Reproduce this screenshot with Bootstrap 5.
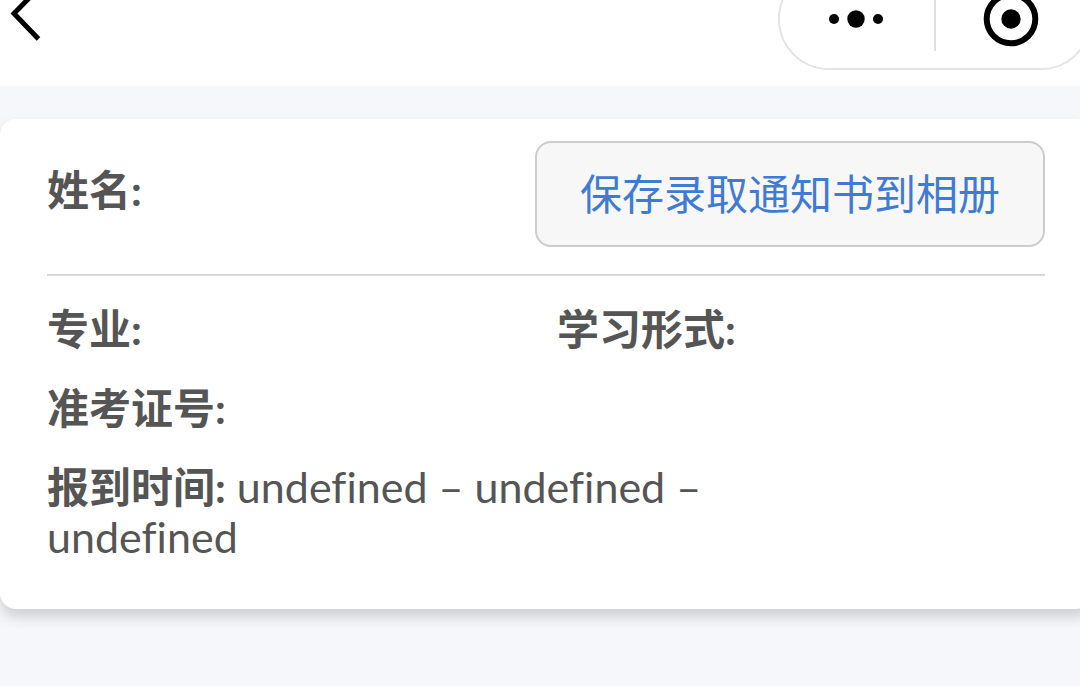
<!DOCTYPE html>
<html lang="zh-CN">
<head>
<meta charset="utf-8">
<meta name="viewport" content="width=device-width, initial-scale=1">
<title>录取通知书</title>
<link href="https://cdn.jsdelivr.net/npm/bootstrap@5.3.0/dist/css/bootstrap.min.css" rel="stylesheet">
<style>
  body { background: #f5f7fb; color: #555; font-family: Lato, "Noto Sans CJK SC", sans-serif; font-size: 42px; line-height: 50px; font-variant-ligatures: none; }
  .topbar { height: 86px; }
  .capsule { width: 314px; height: 102px; margin: -32px -12px 0 0; border: 2px solid #e4e4e4; border-radius: 51px; }
  .capsule .btn { width: 154px; }
  .capsule .split { width: 2px; height: 64px; background: #e0e0e0; }
  .page-body { padding: 33px 0 40px; }
  .notice { margin-right: -12px; padding: 22px 47px 47px; border: 0; border-radius: 16px; color: inherit; box-shadow: 0 8px 14px rgba(0, 0, 0, .16); }
  .name-line { padding-bottom: 27px; border-bottom: 2px solid #d8d8d8; }
  .save-btn { width: 510px; max-width: 60%; height: 106px; padding: 0; background: #f7f7f7; border: 2px solid #ccc; border-radius: 16px; color: #3f7bd4; font-family: inherit; font-size: inherit; line-height: inherit; }
  .save-btn:hover { background: #eee; color: #3f7bd4; }
  .details { padding-top: 28px; gap: 29px; }
  .pair { --bs-gutter-x: 22px; }
  .schedule { max-width: 680px; font-size: 43px; }
  .field-name { font-size: 42px; font-weight: 700; }
</style>
</head>
<body>
<div class="min-vh-100 overflow-hidden">
  <header class="topbar bg-white d-flex justify-content-between align-items-start overflow-hidden">
    <button type="button" class="btn border-0 p-0 lh-1" aria-label="返回">
      <svg class="d-block" width="56" height="56" viewBox="0 0 56 56" fill="none" stroke="#000" stroke-width="5"><path d="M39-12 14 13.500 38.500 39"/></svg>
    </button>
    <div class="capsule d-flex align-items-center">
      <button type="button" class="btn border-0 p-0" aria-label="更多">
        <svg width="60" height="60" viewBox="-29 -30 60 60"><circle cx="-22" r="5"/><circle r="8.700"/><circle cx="22" r="5"/></svg>
      </button>
      <span class="split"></span>
      <button type="button" class="btn border-0 p-0" aria-label="关闭">
        <svg width="60" height="60" viewBox="-28 -30 60 60"><circle r="24.300" fill="none" stroke="#000" stroke-width="6"/><circle r="9.700"/></svg>
      </button>
    </div>
  </header>
  <main class="page-body">
    <section class="card notice">
      <div class="name-line d-flex justify-content-between align-items-start">
        <div class="field-name pt-4">姓名:</div>
        <button type="button" class="btn save-btn">保存录取通知书到相册</button>
      </div>
      <div class="details d-flex flex-column">
        <div class="row pair">
          <div class="col-6 field-name">专业:</div>
          <div class="col-6 field-name">学习形式:</div>
        </div>
        <div class="field-name">准考证号:</div>
        <div class="schedule"><span class="field-name">报到时间:</span> undefined – undefined – undefined</div>
      </div>
    </section>
  </main>
</div>
<script src="https://cdn.jsdelivr.net/npm/bootstrap@5.3.0/dist/js/bootstrap.bundle.min.js"></script>
</body>
</html>
